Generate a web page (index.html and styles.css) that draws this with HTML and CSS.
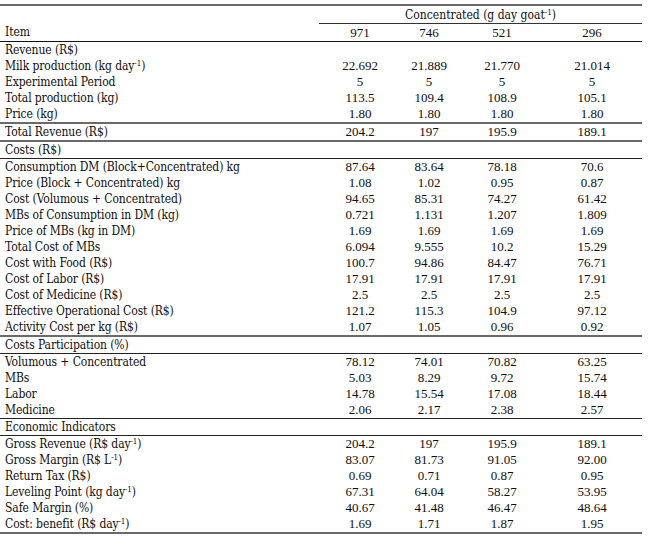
FILE: index.html
```html
<!DOCTYPE html>
<html>
<head>
<meta charset="utf-8">
<link rel="stylesheet" href="styles.css">
</head>
<body>
<table class="tbl">
  <colgroup>
    <col class="c-label"><col class="c-a"><col class="c-b"><col class="c-c"><col class="c-d">
  </colgroup>
  <thead>
    <tr class="h1">
      <th class="lbl"></th>
      <th colspan="4" class="group">Concentrated (g day goat<sup>-1</sup>)</th>
    </tr>
    <tr class="h2">
      <th class="lbl">Item</th>
      <th class="num">971</th><th class="num">746</th><th class="num">521</th><th class="num">296</th>
    </tr>
  </thead>
  <tbody>
    <tr><td class="lbl">Revenue (R$)</td><td></td><td></td><td></td><td></td></tr>
    <tr><td class="lbl">Milk production (kg day<sup>-1</sup>)</td><td class="num">22.692</td><td class="num">21.889</td><td class="num">21.770</td><td class="num">21.014</td></tr>
    <tr><td class="lbl">Experimental Period</td><td class="num">5</td><td class="num">5</td><td class="num">5</td><td class="num">5</td></tr>
    <tr><td class="lbl">Total production (kg)</td><td class="num">113.5</td><td class="num">109.4</td><td class="num">108.9</td><td class="num">105.1</td></tr>
    <tr class="thick"><td class="lbl">Price (kg)</td><td class="num">1.80</td><td class="num">1.80</td><td class="num">1.80</td><td class="num">1.80</td></tr>
    <tr class="thick"><td class="lbl">Total Revenue (R$)</td><td class="num">204.2</td><td class="num">197</td><td class="num">195.9</td><td class="num">189.1</td></tr>
    <tr class="thin"><td class="lbl">Costs (R$)</td><td></td><td></td><td></td><td></td></tr>
    <tr><td class="lbl">Consumption DM (Block+Concentrated) kg</td><td class="num">87.64</td><td class="num">83.64</td><td class="num">78.18</td><td class="num">70.6</td></tr>
    <tr><td class="lbl">Price (Block + Concentrated) kg</td><td class="num">1.08</td><td class="num">1.02</td><td class="num">0.95</td><td class="num">0.87</td></tr>
    <tr><td class="lbl">Cost (Volumous + Concentrated)</td><td class="num">94.65</td><td class="num">85.31</td><td class="num">74.27</td><td class="num">61.42</td></tr>
    <tr><td class="lbl">MBs of Consumption in DM (kg)</td><td class="num">0.721</td><td class="num">1.131</td><td class="num">1.207</td><td class="num">1.809</td></tr>
    <tr><td class="lbl">Price of MBs (kg in DM)</td><td class="num">1.69</td><td class="num">1.69</td><td class="num">1.69</td><td class="num">1.69</td></tr>
    <tr><td class="lbl">Total Cost of MBs</td><td class="num">6.094</td><td class="num">9.555</td><td class="num">10.2</td><td class="num">15.29</td></tr>
    <tr><td class="lbl">Cost with Food (R$)</td><td class="num">100.7</td><td class="num">94.86</td><td class="num">84.47</td><td class="num">76.71</td></tr>
    <tr><td class="lbl">Cost of Labor (R$)</td><td class="num">17.91</td><td class="num">17.91</td><td class="num">17.91</td><td class="num">17.91</td></tr>
    <tr><td class="lbl">Cost of Medicine (R$)</td><td class="num">2.5</td><td class="num">2.5</td><td class="num">2.5</td><td class="num">2.5</td></tr>
    <tr><td class="lbl">Effective Operational Cost (R$)</td><td class="num">121.2</td><td class="num">115.3</td><td class="num">104.9</td><td class="num">97.12</td></tr>
    <tr class="thick"><td class="lbl">Activity Cost per kg (R$)</td><td class="num">1.07</td><td class="num">1.05</td><td class="num">0.96</td><td class="num">0.92</td></tr>
    <tr class="thin"><td class="lbl">Costs Participation (%)</td><td></td><td></td><td></td><td></td></tr>
    <tr><td class="lbl">Volumous + Concentrated</td><td class="num">78.12</td><td class="num">74.01</td><td class="num">70.82</td><td class="num">63.25</td></tr>
    <tr><td class="lbl">MBs</td><td class="num">5.03</td><td class="num">8.29</td><td class="num">9.72</td><td class="num">15.74</td></tr>
    <tr><td class="lbl">Labor</td><td class="num">14.78</td><td class="num">15.54</td><td class="num">17.08</td><td class="num">18.44</td></tr>
    <tr class="thin"><td class="lbl">Medicine</td><td class="num">2.06</td><td class="num">2.17</td><td class="num">2.38</td><td class="num">2.57</td></tr>
    <tr class="thin"><td class="lbl">Economic Indicators</td><td></td><td></td><td></td><td></td></tr>
    <tr><td class="lbl">Gross Revenue (R$ day<sup>-1</sup>)</td><td class="num">204.2</td><td class="num">197</td><td class="num">195.9</td><td class="num">189.1</td></tr>
    <tr><td class="lbl">Gross Margin (R$ L<sup>-1</sup>)</td><td class="num">83.07</td><td class="num">81.73</td><td class="num">91.05</td><td class="num">92.00</td></tr>
    <tr><td class="lbl">Return Tax (R$)</td><td class="num">0.69</td><td class="num">0.71</td><td class="num">0.87</td><td class="num">0.95</td></tr>
    <tr><td class="lbl">Leveling Point (kg day<sup>-1</sup>)</td><td class="num">67.31</td><td class="num">64.04</td><td class="num">58.27</td><td class="num">53.95</td></tr>
    <tr><td class="lbl">Safe Margin (%)</td><td class="num">40.67</td><td class="num">41.48</td><td class="num">46.47</td><td class="num">48.64</td></tr>
    <tr class="thick"><td class="lbl">Cost: benefit (R$ day<sup>-1</sup>)</td><td class="num">1.69</td><td class="num">1.71</td><td class="num">1.87</td><td class="num">1.95</td></tr>
  </tbody>
</table>
</body>
</html>
```

FILE: styles.css
```css
html, body {
  margin: 0;
  padding: 0;
  background: #ffffff;
}

.tbl {
  margin-top: 4px;
  width: 642px;
  border-collapse: collapse;
  table-layout: fixed;
  color: #0e0e0e;
  font-family: "Liberation Serif", "Times New Roman", serif;
  font-size: 13px;
  line-height: 16px;
  border-top: 2px solid #6a6a6a;
}

.c-label { width: 319px; }
.c-a { width: 74px; }
.c-b { width: 77px; }
.c-c { width: 74px; }
.c-d { width: 98px; }

.tbl th, .tbl td {
  padding: 0;
  height: 16px;
  font-weight: normal;
  white-space: nowrap;
}

.tbl .lbl {
  text-align: left;
  padding-left: 5px;
  font-family: "DejaVu Serif Condensed", "DejaVu Serif", serif;
  font-size: 12px;
  letter-spacing: -0.1px;
}

.tbl .num {
  text-align: center;
}

.tbl .num:nth-child(2) { padding-left: 8px; }
.tbl .num:nth-child(3) { padding-right: 5px; }
.tbl .num:nth-child(4) { padding-right: 10px; }
.tbl .num:nth-child(5) { padding-right: 2px; }

.h1 th {
  height: 17px;
}

.h1 .group {
  font-family: "DejaVu Serif Condensed", "DejaVu Serif", serif;
  font-size: 12px;
  border-bottom: 1px solid #333;
}

.h2 th {
  height: 17px;
  border-bottom: 1px solid #111;
}

.tbl sup {
  font-size: 8px;
  line-height: 0;
  vertical-align: 4px;
}

.thick td {
  border-bottom: 2px solid #6a6a6a;
}

.thin td {
  border-bottom: 1px solid #222;
}
```
